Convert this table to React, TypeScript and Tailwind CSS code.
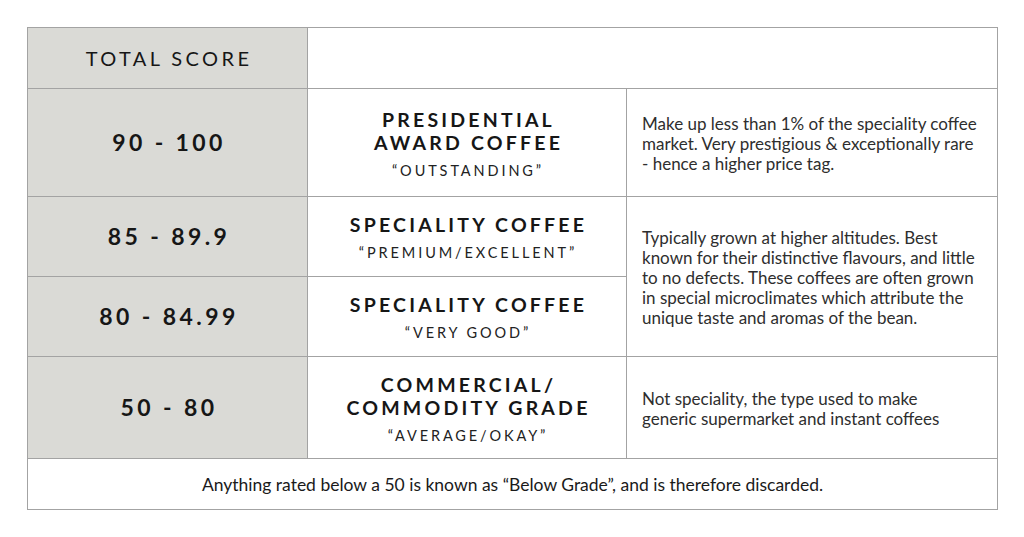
import React from "react";

const font = { fontFamily: "Lato, 'Open Sans', sans-serif" };

function Score({ children }: { children: React.ReactNode }) {
  return (
    <div className="bg-[#dadad6] border-r border-b border-[#a3a3a3] flex items-center justify-center">
      <span className="text-[23px] font-bold tracking-[3.4px] text-[#161616] leading-none pl-[3px]">{children}</span>
    </div>
  );
}

function Grade({ lines, sub }: { lines: string[]; sub: string }) {
  return (
    <div className="border-r border-b border-[#a3a3a3] flex flex-col items-center justify-center text-center pt-[3px]">
      {lines.map((l) => (
        <div key={l} className="text-[19.5px] font-bold tracking-[3.2px] leading-[23px] text-[#161616] whitespace-nowrap pl-[3px]">
          {l}
        </div>
      ))}
      <div className="mt-[7px] text-[14.5px] tracking-[2.9px] leading-[20px] text-[#222] whitespace-nowrap pl-[2px]">{sub}</div>
    </div>
  );
}

function Desc({ lines, className = "" }: { lines: string[]; className?: string }) {
  return (
    <div className={"border-r border-b border-[#a3a3a3] flex flex-col justify-center pl-[15px] pt-[2px] " + className}>
      {lines.map((l) => (
        <div key={l} className="text-[17px] leading-[20px] text-[#2e2e2e] whitespace-nowrap">
          {l}
        </div>
      ))}
    </div>
  );
}

export default function App() {
  return (
    <div className="w-[1024px] h-[537px] bg-white pt-[27px] pl-[27px]" style={font}>
      <div className="w-[971px] border-l border-t border-[#a3a3a3] grid grid-cols-[280px_319px_371px] grid-rows-[61px_108px_80px_80px_102px_51px]">
        <div className="bg-[#dadad6] border-r border-b border-[#a3a3a3] flex items-center justify-center">
          <span className="text-[20px] font-normal tracking-[3.4px] text-[#161616] leading-none pl-[3px]">TOTAL SCORE</span>
        </div>
        <div className="col-span-2 border-r border-b border-[#a3a3a3]" />

        <Score>90 - 100</Score>
        <Grade lines={["PRESIDENTIAL", "AWARD COFFEE"]} sub="“OUTSTANDING”" />
        <Desc
          lines={[
            "Make up less than 1% of the speciality coffee",
            "market. Very prestigious & exceptionally rare",
            "- hence a higher price tag.",
          ]}
        />

        <Score>85 - 89.9</Score>
        <Grade lines={["SPECIALITY COFFEE"]} sub="“PREMIUM/EXCELLENT”" />
        <Desc
          className="row-span-2"
          lines={[
            "Typically grown at higher altitudes. Best",
            "known for their distinctive flavours, and little",
            "to no defects. These coffees are often grown",
            "in special microclimates which attribute the",
            "unique taste and aromas of the bean.",
          ]}
        />

        <Score>80 - 84.99</Score>
        <Grade lines={["SPECIALITY COFFEE"]} sub="“VERY GOOD”" />

        <Score>50 - 80</Score>
        <Grade lines={["COMMERCIAL/", "COMMODITY GRADE"]} sub="“AVERAGE/OKAY”" />
        <Desc
          lines={[
            "Not speciality, the type used to make",
            "generic supermarket and instant coffees",
          ]}
        />

        <div className="col-span-3 border-r border-b border-[#a3a3a3] flex items-center justify-center pt-[2px]">
          <span className="text-[17.5px] text-[#1a1a1a] whitespace-nowrap">
            Anything rated below a 50 is known as “Below Grade”, and is therefore discarded.
          </span>
        </div>
      </div>
    </div>
  );
}
